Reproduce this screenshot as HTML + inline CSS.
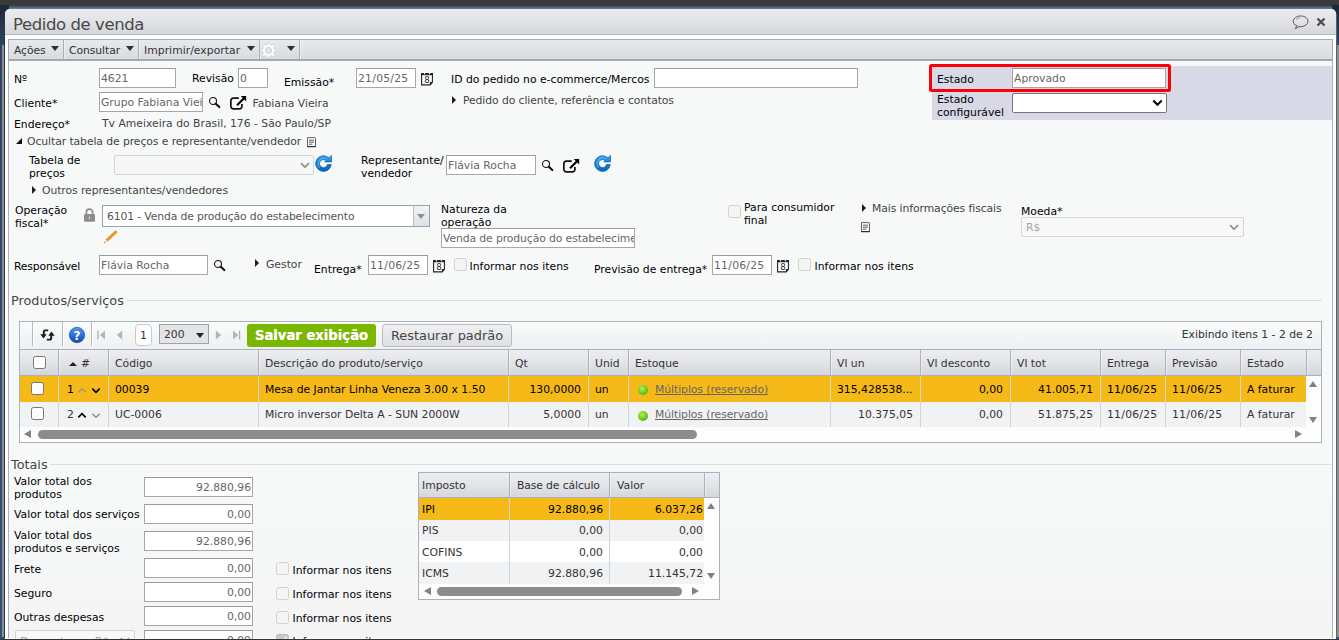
<!DOCTYPE html>
<html lang="pt-BR">
<head>
<meta charset="utf-8">
<title>Pedido de venda</title>
<style>
*{box-sizing:border-box;margin:0;padding:0}
html,body{width:1339px;height:640px;overflow:hidden}
body{position:relative;background:linear-gradient(#1d2636 5px,#2e4566 45px,#33507a 640px);font-family:"DejaVu Sans","Liberation Sans",sans-serif;font-size:10.8px;color:#000}
.abs,.t,.in,.ic,.b{position:absolute}
.t{white-space:nowrap;line-height:13px;height:13px}
.g{color:#444}
.in{background:#fff;border:1px solid #a6a6a6;border-top-color:#9a9a9a;color:#666;line-height:19px;height:20px;padding-left:1px;white-space:nowrap;overflow:hidden}
.in.r{text-align:right;padding-right:1px;padding-left:0}
.cb{position:absolute;width:13px;height:13px;border:1px solid #d2d2d2;border-radius:2.500px;background:#f4f4f5}
.ic{display:block}
/* window */
#bgtop{left:0;top:0;width:1339px;height:5px;background:#3a3a3a}
#win{left:5px;top:9px;width:1331px;height:630px;background:#fff;border-radius:5px 5px 0 0}
#title{left:0;top:0;width:1331px;height:26px;border-radius:5px 5px 0 0;background:linear-gradient(#eaebed,#e3e4e7 45%,#d4d6da);border-bottom:1px solid #b4b9c0}
#title span{position:absolute;left:8px;top:6px;font-size:16.5px;line-height:20px;color:#484848;letter-spacing:-0.42px}
#tb{left:8px;top:39px;width:1325px;height:22px;border:1px solid #a3abb3;border-bottom:2px solid #a1a9b4;background:linear-gradient(#e8e9ec,#d9dbdf)}
#content{left:8px;top:61px;width:1325px;height:577px;border-left:1px solid #a9b1bf;border-right:1px solid #a9b1bf;background:linear-gradient(#f7f9f9,#f7f9f9 72%,#f4f4f5)}
.sep{top:40px;width:1px;height:19px;background:#a9b0b8;box-shadow:1px 0 0 rgba(255,255,255,.45)}
.tbt{color:#333;letter-spacing:-0.08px}
.dn{width:0;height:0;border-left:4.500px solid transparent;border-right:4.500px solid transparent;border-top:5px solid #2d2d2d}
.lg{font-size:12.8px;line-height:16px;height:16px;color:#444}
.hcb,.rcb{width:13px;height:13px;border:1px solid #767676;border-radius:2.500px;background:#fff}
</style>
</head>
<body>
<div id="bgtop" class="abs"></div>
<div class="abs" style="left:9px;top:5px;width:1323px;height:5px;background:linear-gradient(#2b3848,#8593a1)"></div>
<div class="abs" style="left:1.500px;top:45px;width:2.500px;height:592px;background:#8e8e8e"></div><div class="abs" style="left:1336px;top:45px;width:3px;height:592px;background:#8e8e8e"></div><div class="abs" style="left:4px;top:12px;width:1px;height:626px;background:#30343c"></div><div class="abs" style="left:1336px;top:14px;width:.7px;height:624px;background:#59616e"></div>
<div id="win" class="abs"><div id="title" class="abs"><span>Pedido de venda</span></div></div>
<div id="tb" class="abs"></div>
<div id="content" class="abs"></div>

<div class="abs sep" style="left:63px"></div><div class="abs sep" style="left:138px"></div><div class="abs sep" style="left:259px"></div><div class="abs sep" style="left:299px"></div>
<div class="t tbt" style="left:14px;top:44px">Ações</div><div class="abs dn" style="left:51px;top:46px"></div>
<div class="t tbt" style="left:69px;top:44px">Consultar</div><div class="abs dn" style="left:126px;top:46px"></div>
<div class="t tbt" style="left:144px;top:44px;letter-spacing:0.03px">Imprimir/exportar</div><div class="abs dn" style="left:247px;top:46px"></div>
<svg class="ic" style="left:260.400px;top:42.200px" width="17" height="17" viewBox="0 0 17 17"><path d="M7.17 2.75L7.28 0.80L9.72 0.80L9.83 2.75L11.62 3.49L13.08 2.19L14.81 3.92L13.51 5.38L14.25 7.17L16.20 7.28L16.20 9.72L14.25 9.83L13.51 11.62L14.81 13.08L13.08 14.81L11.62 13.51L9.83 14.25L9.72 16.20L7.28 16.20L7.17 14.25L5.38 13.51L3.92 14.81L2.19 13.08L3.49 11.62L2.75 9.83L0.80 9.72L0.80 7.28L2.75 7.17L3.49 5.38L2.19 3.92L3.92 2.19L5.38 3.49z" fill="#fff" stroke="#c6c9cd" stroke-width=".7" stroke-linejoin="round"/><circle cx="8.500" cy="8.500" r="3.100" fill="#e4e5e8" stroke="#c3c6ca" stroke-width=".8"/></svg>
<div class="abs dn" style="left:287px;top:46px"></div>
<svg class="ic" style="left:1292.300px;top:15px" width="17" height="15" viewBox="0 0 17 15"><ellipse cx="8.6" cy="6.300" rx="7.400" ry="5.400" fill="none" stroke="#5a5a5a" stroke-width="1"/><path d="M4.800 10.700 3.300 13.700 7.400 11.600" fill="#e6e7ea" stroke="#5a5a5a" stroke-width="1" stroke-linejoin="round"/><path d="M4 4.600C5.200 3.300 6.800 2.800 8.200 2.800" fill="none" stroke="#8a8a8a" stroke-width=".8"/></svg>
<svg class="ic" style="left:1316px;top:17px" width="10" height="10" viewBox="0 0 10 10"><path d="M1.500 1.500 8.500 8.500M8.500 1.500 1.500 8.500" stroke="#4d4d4d" stroke-width="2.300" stroke-linecap="butt"/></svg>
<!--TOOLBAR-->
<div class="t " style="left:14px;top:73px;">Nº</div>
<div class="in " style="left:99px;top:68px;width:77px;">4621</div>
<div class="t " style="left:192px;top:72px;">Revisão</div>
<div class="in " style="left:238px;top:68px;width:30px;">0</div>
<div class="t " style="left:284px;top:76px;">Emissão*</div>
<div class="in " style="left:356px;top:68px;width:60px;letter-spacing:0.25px">21/05/25</div>
<svg class="ic" style="left:421px;top:71px" width="13" height="15" viewBox="0 0 13 15"><path d="M.6 2.600H11.400V11.400L9.200 13.900H.6z" fill="#fff" stroke="#222" stroke-width="1.100"/><rect x="0" y="2" width="12" height="2.200" fill="#222"/><path d="M3.500 1V3.200M8.500 1V3.200" stroke="#f7f9f9" stroke-width="1.200"/><path d="M8.900 11.100H11.800L8.900 14.200z" fill="#222"/><text x="6" y="11.700" font-size="8.600" text-anchor="middle" font-family="DejaVu Sans,Liberation Sans,sans-serif" fill="#222">8</text></svg>
<div class="t " style="left:451px;top:73px;">ID do pedido no e-commerce/Mercos</div>
<div class="in " style="left:654px;top:68px;width:204px;"></div>
<div class="abs" style="left:932px;top:66px;width:400px;height:54px;background:#d8d8e6"></div>
<div class="abs" style="left:929px;top:64px;width:242px;height:28px;border:3px solid #fb0006;border-radius:2.500px"></div>
<div class="t " style="left:937px;top:73px;">Estado</div>
<div class="in " style="left:1012px;top:68px;width:154px;">Aprovado</div>
<div class="t " style="left:937px;top:93px;">Estado</div>
<div class="t " style="left:937px;top:106px;">configurável</div>
<div class="abs" style="left:1012px;top:93px;width:155px;height:20px;border:1px solid #767676;border-radius:2px;background:#fff"></div>
<svg class="ic" style="left:1152.300px;top:98.500px" width="11" height="8" viewBox="0 0 11 8"><path d="M1.300 1.500 5.500 5.800 9.700 1.500" fill="none" stroke="#000" stroke-width="2"/></svg>
<div class="t " style="left:14px;top:97px;">Cliente*</div>
<div class="in " style="left:99px;top:92px;width:104px;">Grupo Fabiana Vieira</div>
<svg class="ic" style="left:208px;top:96px" width="13" height="13" viewBox="0 0 13 13"><circle cx="5" cy="5" r="3.500" fill="none" stroke="#111" stroke-width="1.100"/><path d="M7.800 7.800 11.300 11.100" stroke="#111" stroke-width="2.100" stroke-linecap="round"/></svg>
<svg class="ic" style="left:229px;top:95px" width="18" height="16" viewBox="0 0 18 16"><path d="M9.800 3.050H4.350A2.500 2.500 0 0 0 1.850 5.550V11.350A2.500 2.500 0 0 0 4.350 13.850H10.450A2.500 2.500 0 0 0 12.950 11.350V9" fill="none" stroke="#111" stroke-width="1.700"/><path d="M8 10.200 15 3.200" stroke="#000" stroke-width="2.200"/><path d="M11.800 1H17.200V6.500z" fill="#000"/></svg>
<div class="t g" style="left:252.600px;top:97px;">Fabiana Vieira</div>
<div class="abs" style="left:451.8px;top:96px;width:0;height:0;border-top:4.100px solid transparent;border-bottom:4.100px solid transparent;border-left:4.300px solid #1e1e1e"></div>
<div class="t g" style="left:463px;top:94px;letter-spacing:-0.085px">Pedido do cliente, referência e contatos</div>
<div class="t " style="left:14px;top:118px;">Endereço*</div>
<div class="t g" style="left:102px;top:117px;">Tv Ameixeira do Brasil, 176 - São Paulo/SP</div>
<div class="abs" style="left:16px;top:137.500px;width:0;height:0;border-left:6.500px solid transparent;border-bottom:6.500px solid #111"></div>
<div class="t g" style="left:27px;top:135px;letter-spacing:-0.075px">Ocultar tabela de preços e representante/vendedor</div>
<svg class="ic" style="left:307.3px;top:137px" width="10" height="11" viewBox="0 0 10 11"><path d="M.5 .6H7.800Q8.500 .6 8.500 1.300V9.600H.5z" fill="#fcfcfc" stroke="#3a3a3a" stroke-width=".8"/><path d="M.2 9.600H8.800" stroke="#2a2a2a" stroke-width="1.100"/><path d="M2 3.200H7M2 5.200H7M2 7.200H5.200" stroke="#333" stroke-width=".8"/></svg>
<div class="t " style="left:29px;top:154px;">Tabela de</div>
<div class="t " style="left:29px;top:167px;">preços</div>
<div class="abs" style="left:114px;top:155px;width:200px;height:20px;border:1px solid #d4d4d4;border-radius:2px;background:#f6f7f7"></div>
<svg class="ic" style="left:300px;top:162px" width="10" height="7" viewBox="0 0 10 7"><path d="M1 1.200 5 5.200 9 1.200" fill="none" stroke="#959595" stroke-width="1.800"/></svg>
<svg class="ic" style="left:314.800px;top:155.300px" width="17" height="17" viewBox="0 0 17 17"><defs><linearGradient id="rg316" x1="0" y1="0" x2="0" y2="1"><stop offset="0" stop-color="#3aa3ec"/><stop offset=".55" stop-color="#1479cf"/><stop offset="1" stop-color="#0a64b8"/></linearGradient></defs><path d="M16.350 9.500A7.900 7.900 0 1 1 13.930 2.860L16.500 .4V6.900H9.700L11.100 5.560A4 4 0 1 0 12.400 9.500z" fill="url(#rg316)" stroke="#0b62b6" stroke-width=".7" stroke-linejoin="round"/><path d="M4.400 12.500A5.900 5.900 0 0 1 12.300 4" fill="none" stroke="#5cb8f4" stroke-width="1.300" opacity=".75"/></svg>
<div class="t " style="left:361px;top:154px;">Representante/</div>
<div class="t " style="left:361px;top:167px;">vendedor</div>
<div class="in " style="left:446px;top:155px;width:90px;">Flávia Rocha</div>
<svg class="ic" style="left:541px;top:159px" width="13" height="13" viewBox="0 0 13 13"><circle cx="5" cy="5" r="3.500" fill="none" stroke="#111" stroke-width="1.100"/><path d="M7.800 7.800 11.300 11.100" stroke="#111" stroke-width="2.100" stroke-linecap="round"/></svg>
<svg class="ic" style="left:562px;top:158px" width="18" height="16" viewBox="0 0 18 16"><path d="M9.800 3.050H4.350A2.500 2.500 0 0 0 1.850 5.550V11.350A2.500 2.500 0 0 0 4.350 13.850H10.450A2.500 2.500 0 0 0 12.950 11.350V9" fill="none" stroke="#111" stroke-width="1.700"/><path d="M8 10.200 15 3.200" stroke="#000" stroke-width="2.200"/><path d="M11.800 1H17.200V6.500z" fill="#000"/></svg>
<svg class="ic" style="left:593.800px;top:155.300px" width="17" height="17" viewBox="0 0 17 17"><defs><linearGradient id="rg595" x1="0" y1="0" x2="0" y2="1"><stop offset="0" stop-color="#3aa3ec"/><stop offset=".55" stop-color="#1479cf"/><stop offset="1" stop-color="#0a64b8"/></linearGradient></defs><path d="M16.350 9.500A7.900 7.900 0 1 1 13.930 2.860L16.500 .4V6.900H9.700L11.100 5.560A4 4 0 1 0 12.400 9.500z" fill="url(#rg595)" stroke="#0b62b6" stroke-width=".7" stroke-linejoin="round"/><path d="M4.400 12.500A5.900 5.900 0 0 1 12.300 4" fill="none" stroke="#5cb8f4" stroke-width="1.300" opacity=".75"/></svg>
<div class="abs" style="left:32px;top:185.5px;width:0;height:0;border-top:4.100px solid transparent;border-bottom:4.100px solid transparent;border-left:4.300px solid #1e1e1e"></div>
<div class="t g" style="left:42px;top:184px;letter-spacing:-0.07px">Outros representantes/vendedores</div>
<div class="t " style="left:15px;top:204px;">Operação</div>
<div class="t " style="left:15px;top:217px;">fiscal*</div>
<svg class="ic" style="left:83px;top:208px" width="13" height="15" viewBox="0 0 13 15"><path d="M3.400 6.500V4.300A3.100 3.100 0 0 1 9.600 4.300V6.500" fill="none" stroke="#8c8c8c" stroke-width="1.700"/><rect x="1" y="6" width="11" height="7.800" rx="1.200" fill="#8c8c8c"/><path d="M6 8.800H7V11.200H6.300V9.700H5.700z" fill="#f2f2f2"/></svg>
<div class="abs" style="left:102px;top:205px;width:328px;height:22px;border:1px solid #94a2b6;background:#fff"></div>
<div class="t " style="left:107px;top:210px;color:#555;letter-spacing:-0.13px">6101 - Venda de produção do estabelecimento</div>
<div class="abs" style="left:413px;top:206px;width:16px;height:20px;border-left:1px solid #b7bcc4;background:linear-gradient(#f3f4f6,#dfe1e5)"></div>
<div class="abs" style="left:416.500px;top:214px;width:0;height:0;border-left:4.500px solid transparent;border-right:4.500px solid transparent;border-top:5px solid #8a8f98"></div>
<svg class="ic" style="left:103px;top:229px" width="16" height="15" viewBox="0 0 16 15"><path d="M12.400 1.200 14.700 3.300 4.800 12.600 2.500 10.500z" fill="#f0952c"/><path d="M2.500 10.500 4.800 12.600 1.200 13.900z" fill="#f3d7a8"/><path d="M1.200 13.900 2.300 13.500 1.600 12.800z" fill="#333"/></svg>
<div class="t " style="left:441px;top:203px;">Natureza da</div>
<div class="t " style="left:441px;top:216px;">operação</div>
<div class="in " style="left:441px;top:228px;width:194px;letter-spacing:-0.1px">Venda de produção do estabelecimento</div>
<div class="cb" style="left:728px;top:205px"></div>
<div class="t " style="left:744px;top:201px;">Para consumidor</div>
<div class="t " style="left:744px;top:214px;">final</div>
<div class="abs" style="left:861.8px;top:204px;width:0;height:0;border-top:4.100px solid transparent;border-bottom:4.100px solid transparent;border-left:4.300px solid #1e1e1e"></div>
<div class="t g" style="left:872px;top:202px;letter-spacing:-0.08px">Mais informações fiscais</div>
<svg class="ic" style="left:861.3px;top:222px" width="10" height="11" viewBox="0 0 10 11"><path d="M.5 .6H7.800Q8.500 .6 8.500 1.300V9.600H.5z" fill="#fcfcfc" stroke="#3a3a3a" stroke-width=".8"/><path d="M.2 9.600H8.800" stroke="#2a2a2a" stroke-width="1.100"/><path d="M2 3.200H7M2 5.200H7M2 7.200H5.200" stroke="#333" stroke-width=".8"/></svg>
<div class="t " style="left:1021px;top:205px;">Moeda*</div>
<div class="abs" style="left:1021px;top:217px;width:223px;height:20px;border:1px solid #d6d6d6;border-radius:2px;background:#f7f8f8"></div>
<div class="t " style="left:1026px;top:221px;color:#a8a8a8">R$</div>
<svg class="ic" style="left:1229px;top:224px" width="10" height="7" viewBox="0 0 10 7"><path d="M1 1.200 5 5.200 9 1.200" fill="none" stroke="#959595" stroke-width="1.800"/></svg>
<div class="t " style="left:14px;top:260px;letter-spacing:-0.15px">Responsável</div>
<div class="in " style="left:99px;top:255px;width:109px;">Flávia Rocha</div>
<svg class="ic" style="left:213px;top:259.3px" width="13" height="13" viewBox="0 0 13 13"><circle cx="5" cy="5" r="3.500" fill="none" stroke="#111" stroke-width="1.100"/><path d="M7.800 7.800 11.300 11.100" stroke="#111" stroke-width="2.100" stroke-linecap="round"/></svg>
<div class="abs" style="left:254.8px;top:259px;width:0;height:0;border-top:4.100px solid transparent;border-bottom:4.100px solid transparent;border-left:4.300px solid #1e1e1e"></div>
<div class="t g" style="left:266px;top:258px;letter-spacing:0px">Gestor</div>
<div class="t " style="left:314px;top:263px;">Entrega*</div>
<div class="in " style="left:368px;top:255px;width:60px;letter-spacing:0.25px">11/06/25</div>
<svg class="ic" style="left:432.6px;top:258px" width="13" height="15" viewBox="0 0 13 15"><path d="M.6 2.600H11.400V11.400L9.200 13.900H.6z" fill="#fff" stroke="#222" stroke-width="1.100"/><rect x="0" y="2" width="12" height="2.200" fill="#222"/><path d="M3.500 1V3.200M8.500 1V3.200" stroke="#f7f9f9" stroke-width="1.200"/><path d="M8.900 11.100H11.800L8.900 14.200z" fill="#222"/><text x="6" y="11.700" font-size="8.600" text-anchor="middle" font-family="DejaVu Sans,Liberation Sans,sans-serif" fill="#222">8</text></svg>
<div class="cb" style="left:454px;top:258px"></div>
<div class="t " style="left:469.5px;top:260px;letter-spacing:0.04px">Informar nos itens</div>
<div class="t " style="left:594px;top:263px;">Previsão de entrega*</div>
<div class="in " style="left:712px;top:255px;width:60px;letter-spacing:0.25px">11/06/25</div>
<svg class="ic" style="left:777.2px;top:258px" width="13" height="15" viewBox="0 0 13 15"><path d="M.6 2.600H11.400V11.400L9.200 13.900H.6z" fill="#fff" stroke="#222" stroke-width="1.100"/><rect x="0" y="2" width="12" height="2.200" fill="#222"/><path d="M3.500 1V3.200M8.500 1V3.200" stroke="#f7f9f9" stroke-width="1.200"/><path d="M8.900 11.100H11.800L8.900 14.200z" fill="#222"/><text x="6" y="11.700" font-size="8.600" text-anchor="middle" font-family="DejaVu Sans,Liberation Sans,sans-serif" fill="#222">8</text></svg>
<div class="cb" style="left:798px;top:258px"></div>
<div class="t " style="left:814.5px;top:260px;letter-spacing:0.04px">Informar nos itens</div>
<!--FORM-->
<div class="t lg" style="left:11px;top:293px;">Produtos/serviços</div>
<div class="abs" style="left:127px;top:300px;width:1195px;height:1px;background:#dcdee0"></div>
<div class="abs" style="left:19px;top:321px;width:1303px;height:122px;border:1px solid #a9b1bd;background:#fdfdfd"></div>
<div class="abs" style="left:20px;top:322px;width:1301px;height:27px;background:linear-gradient(#fafbfb,#eef0f1)"></div>
<div class="abs" style="left:32px;top:322px;width:1px;height:24px;background:#b3b9c1;box-shadow:1px 0 0 #fff"></div>
<div class="abs" style="left:62px;top:322px;width:1px;height:24px;background:#b3b9c1;box-shadow:1px 0 0 #fff"></div>
<div class="abs" style="left:91px;top:322px;width:1px;height:24px;background:#b3b9c1;box-shadow:1px 0 0 #fff"></div>
<svg class="ic" style="left:39.500px;top:329px" width="15" height="12" viewBox="0 0 15 12"><path d="M8.200 1.400H5.400Q3.800 1.400 3.800 3V6" fill="none" stroke="#1a1a1a" stroke-width="1.900"/><path d="M.3 5.200H6.700L3.500 9.500z" fill="#1a1a1a"/><path d="M6.800 10.600H9.600Q11.200 10.600 11.200 9V6" fill="none" stroke="#1a1a1a" stroke-width="1.900"/><path d="M14.700 6.800H8.300L11.500 2.500z" fill="#1a1a1a"/></svg>
<svg class="ic" style="left:68px;top:326px" width="18" height="18" viewBox="0 0 18 18"><defs><linearGradient id="hg" x1="0" y1="0" x2="0" y2="1"><stop offset="0" stop-color="#5a98ea"/><stop offset=".5" stop-color="#2f6fd6"/><stop offset="1" stop-color="#1446b0"/></linearGradient></defs><circle cx="9" cy="9" r="7.700" fill="url(#hg)" stroke="#2352b4" stroke-width=".7"/><text x="9" y="14.100" font-size="12" font-weight="bold" text-anchor="middle" fill="#fff" font-family="DejaVu Sans,Liberation Sans,sans-serif">?</text></svg>
<svg class="ic" style="left:97px;top:330px" width="9" height="10" viewBox="0 0 9 10"><path d="M1 .5V9.500" stroke="#b4b4b4" stroke-width="1.400"/><path d="M8 .5V9.500L2.800 5z" fill="#b4b4b4"/></svg>
<svg class="ic" style="left:116px;top:330px" width="7" height="10" viewBox="0 0 7 10"><path d="M6.200 .5V9.500L.8 5z" fill="#b4b4b4"/></svg>
<div class="abs" style="left:135px;top:324px;width:17px;height:22px;border:1px solid #c6c8cc;border-radius:4px;background:#fff;text-align:center;line-height:21px;color:#333">1</div>
<div class="abs" style="left:159px;top:324px;width:50px;height:20px;border:1px solid #a2a2a2;background:#e3e4e7"></div>
<div class="t " style="left:164px;top:328px;color:#333">200</div>
<div class="abs" style="left:195.500px;top:333px;width:0;height:0;border-left:4.500px solid transparent;border-right:4.500px solid transparent;border-top:5px solid #222"></div>
<svg class="ic" style="left:215px;top:330px" width="7" height="10" viewBox="0 0 7 10"><path d="M.8 .5V9.500L6.200 5z" fill="#b4b4b4"/></svg>
<svg class="ic" style="left:232px;top:330px" width="9" height="10" viewBox="0 0 9 10"><path d="M7.500 .5V9.500" stroke="#b4b4b4" stroke-width="1.400"/><path d="M1 .5V9.500L6.200 5z" fill="#b4b4b4"/></svg>
<div class="abs" style="left:247px;top:324px;width:129px;height:23px;border-radius:3px;background:#7ab800;color:#fff;font-weight:bold;font-size:13.2px;line-height:24px;text-align:center;letter-spacing:0;text-shadow:0 0 .5px #fff">Salvar exibição</div>
<div class="abs" style="left:382px;top:324px;width:130px;height:23px;border-radius:3px;border:1px solid #b9bcc1;background:linear-gradient(#f0f0f2,#dddfe2);color:#444;font-size:12.9px;line-height:22px;text-align:center">Restaurar padrão</div>
<div class="t " style="right:26px;top:328px;color:#333">Exibindo itens 1 - 2 de 2</div>
<div class="abs" style="left:20px;top:349px;width:1301px;height:27px;border-top:1px solid #a9b1bd;border-bottom:1px solid #a9b1bd;background:linear-gradient(#edeef1,#e1e3e6 55%,#d3d6db)"></div>
<div class="abs" style="left:58px;top:350px;width:1px;height:25px;background:#aab1bb;box-shadow:1px 0 0 rgba(255,255,255,.4)"></div>
<div class="abs" style="left:108px;top:350px;width:1px;height:25px;background:#aab1bb;box-shadow:1px 0 0 rgba(255,255,255,.4)"></div>
<div class="abs" style="left:258px;top:350px;width:1px;height:25px;background:#aab1bb;box-shadow:1px 0 0 rgba(255,255,255,.4)"></div>
<div class="abs" style="left:508px;top:350px;width:1px;height:25px;background:#aab1bb;box-shadow:1px 0 0 rgba(255,255,255,.4)"></div>
<div class="abs" style="left:588px;top:350px;width:1px;height:25px;background:#aab1bb;box-shadow:1px 0 0 rgba(255,255,255,.4)"></div>
<div class="abs" style="left:628px;top:350px;width:1px;height:25px;background:#aab1bb;box-shadow:1px 0 0 rgba(255,255,255,.4)"></div>
<div class="abs" style="left:830px;top:350px;width:1px;height:25px;background:#aab1bb;box-shadow:1px 0 0 rgba(255,255,255,.4)"></div>
<div class="abs" style="left:920px;top:350px;width:1px;height:25px;background:#aab1bb;box-shadow:1px 0 0 rgba(255,255,255,.4)"></div>
<div class="abs" style="left:1010px;top:350px;width:1px;height:25px;background:#aab1bb;box-shadow:1px 0 0 rgba(255,255,255,.4)"></div>
<div class="abs" style="left:1100px;top:350px;width:1px;height:25px;background:#aab1bb;box-shadow:1px 0 0 rgba(255,255,255,.4)"></div>
<div class="abs" style="left:1165px;top:350px;width:1px;height:25px;background:#aab1bb;box-shadow:1px 0 0 rgba(255,255,255,.4)"></div>
<div class="abs" style="left:1240px;top:350px;width:1px;height:25px;background:#aab1bb;box-shadow:1px 0 0 rgba(255,255,255,.4)"></div>
<div class="abs" style="left:1306px;top:350px;width:1px;height:25px;background:#aab1bb;box-shadow:1px 0 0 rgba(255,255,255,.4)"></div>
<div class="abs hcb" style="left:33px;top:356px"></div>
<div class="abs" style="left:69px;top:362px;width:0;height:0;border-left:4px solid transparent;border-right:4px solid transparent;border-bottom:4px solid #222"></div>
<div class="t " style="left:81px;top:357px;color:#333">#</div>
<div class="t " style="left:115px;top:357px;color:#333">Código</div>
<div class="t " style="left:265px;top:357px;color:#333">Descrição do produto/serviço</div>
<div class="t " style="left:515px;top:357px;color:#333">Qt</div>
<div class="t " style="left:595px;top:357px;color:#333">Unid</div>
<div class="t " style="left:635px;top:357px;color:#333">Estoque</div>
<div class="t " style="left:837px;top:357px;color:#333">Vl un</div>
<div class="t " style="left:927px;top:357px;color:#333">Vl desconto</div>
<div class="t " style="left:1017px;top:357px;color:#333">Vl tot</div>
<div class="t " style="left:1107px;top:357px;color:#333">Entrega</div>
<div class="t " style="left:1172px;top:357px;color:#333">Previsão</div>
<div class="t " style="left:1247px;top:357px;color:#333">Estado</div>
<div class="abs" style="left:20px;top:376px;width:1286px;height:26px;background:#f5b918"></div>
<div class="abs" style="left:20px;top:402px;width:1286px;height:25px;background:#f1f2f4"></div>
<div class="abs" style="left:58px;top:376px;width:1px;height:26px;background:#dcd8cc"></div>
<div class="abs" style="left:58px;top:402px;width:1px;height:25px;background:#d0d3d8"></div>
<div class="abs" style="left:108px;top:376px;width:1px;height:26px;background:#dcd8cc"></div>
<div class="abs" style="left:108px;top:402px;width:1px;height:25px;background:#d0d3d8"></div>
<div class="abs" style="left:258px;top:376px;width:1px;height:26px;background:#dcd8cc"></div>
<div class="abs" style="left:258px;top:402px;width:1px;height:25px;background:#d0d3d8"></div>
<div class="abs" style="left:508px;top:376px;width:1px;height:26px;background:#dcd8cc"></div>
<div class="abs" style="left:508px;top:402px;width:1px;height:25px;background:#d0d3d8"></div>
<div class="abs" style="left:588px;top:376px;width:1px;height:26px;background:#dcd8cc"></div>
<div class="abs" style="left:588px;top:402px;width:1px;height:25px;background:#d0d3d8"></div>
<div class="abs" style="left:628px;top:376px;width:1px;height:26px;background:#dcd8cc"></div>
<div class="abs" style="left:628px;top:402px;width:1px;height:25px;background:#d0d3d8"></div>
<div class="abs" style="left:830px;top:376px;width:1px;height:26px;background:#dcd8cc"></div>
<div class="abs" style="left:830px;top:402px;width:1px;height:25px;background:#d0d3d8"></div>
<div class="abs" style="left:920px;top:376px;width:1px;height:26px;background:#dcd8cc"></div>
<div class="abs" style="left:920px;top:402px;width:1px;height:25px;background:#d0d3d8"></div>
<div class="abs" style="left:1010px;top:376px;width:1px;height:26px;background:#dcd8cc"></div>
<div class="abs" style="left:1010px;top:402px;width:1px;height:25px;background:#d0d3d8"></div>
<div class="abs" style="left:1100px;top:376px;width:1px;height:26px;background:#dcd8cc"></div>
<div class="abs" style="left:1100px;top:402px;width:1px;height:25px;background:#d0d3d8"></div>
<div class="abs" style="left:1165px;top:376px;width:1px;height:26px;background:#dcd8cc"></div>
<div class="abs" style="left:1165px;top:402px;width:1px;height:25px;background:#d0d3d8"></div>
<div class="abs" style="left:1240px;top:376px;width:1px;height:26px;background:#dcd8cc"></div>
<div class="abs" style="left:1240px;top:402px;width:1px;height:25px;background:#d0d3d8"></div>
<div class="abs rcb" style="left:31px;top:382px"></div>
<div class="t " style="left:67px;top:383px;color:#000">1</div>
<svg class="ic" style="left:77px;top:387px" width="10" height="7" viewBox="0 0 10 7"><path d="M1.300 5.300 5 1.700 8.700 5.300" fill="none" stroke="#a3987e" stroke-width="1.4"/></svg>
<svg class="ic" style="left:91px;top:387px" width="10" height="7" viewBox="0 0 10 7"><path d="M1.300 1.700 5 5.300 8.700 1.700" fill="none" stroke="#000" stroke-width="1.7"/></svg>
<div class="t " style="left:115px;top:383px;color:#000">00039</div>
<div class="t " style="left:265px;top:383px;color:#000">Mesa de Jantar Linha Veneza 3.00 x 1.50</div>
<div class="t " style="right:758px;top:383px;color:#000">130,0000</div>
<div class="t " style="left:595px;top:383px;color:#000">un</div>
<div class="abs" style="left:638px;top:385px;width:10px;height:10px;border-radius:50%;background:radial-gradient(circle at 40% 35%,#b4f060,#5fc41a 60%,#4aa810)"></div>
<div class="t " style="left:655px;top:383px;color:#666;text-decoration:underline;text-decoration-thickness:1px;text-underline-offset:.5px;letter-spacing:-0.06px">Múltiplos (reservado)</div>
<div class="t " style="left:837px;top:383px;color:#000">315,428538...</div>
<div class="t " style="right:336px;top:383px;color:#000">0,00</div>
<div class="t " style="right:246px;top:383px;color:#000">41.005,71</div>
<div class="t " style="left:1107px;top:383px;color:#000;letter-spacing:0.25px">11/06/25</div>
<div class="t " style="left:1172px;top:383px;color:#000;letter-spacing:0.25px">11/06/25</div>
<div class="t " style="left:1247px;top:383px;color:#000">A faturar</div>
<div class="abs rcb" style="left:31px;top:407px"></div>
<div class="t " style="left:67px;top:408px;color:#333">2</div>
<svg class="ic" style="left:77px;top:412px" width="10" height="7" viewBox="0 0 10 7"><path d="M1.300 5.300 5 1.700 8.700 5.300" fill="none" stroke="#000" stroke-width="1.7"/></svg>
<svg class="ic" style="left:91px;top:412px" width="10" height="7" viewBox="0 0 10 7"><path d="M1.300 1.700 5 5.300 8.700 1.700" fill="none" stroke="#8c8c8c" stroke-width="1.3"/></svg>
<div class="t " style="left:115px;top:408px;color:#333">UC-0006</div>
<div class="t " style="left:265px;top:408px;color:#333">Micro inversor Delta A - SUN 2000W</div>
<div class="t " style="right:758px;top:408px;color:#333">5,0000</div>
<div class="t " style="left:595px;top:408px;color:#333">un</div>
<div class="abs" style="left:638px;top:411px;width:10px;height:10px;border-radius:50%;background:radial-gradient(circle at 40% 35%,#b4f060,#5fc41a 60%,#4aa810)"></div>
<div class="t " style="left:655px;top:408px;color:#666;text-decoration:underline;text-decoration-thickness:1px;text-underline-offset:.5px;letter-spacing:-0.06px">Múltiplos (reservado)</div>
<div class="t " style="right:426px;top:408px;color:#333">10.375,05</div>
<div class="t " style="right:336px;top:408px;color:#333">0,00</div>
<div class="t " style="right:246px;top:408px;color:#333">51.875,25</div>
<div class="t " style="left:1107px;top:408px;color:#333;letter-spacing:0.25px">11/06/25</div>
<div class="t " style="left:1172px;top:408px;color:#333;letter-spacing:0.25px">11/06/25</div>
<div class="t " style="left:1247px;top:408px;color:#333">A faturar</div>
<div class="abs" style="left:1309px;top:381px;width:0;height:0;border-left:4.700px solid transparent;border-right:4.700px solid transparent;border-bottom:6.800px solid #828282"></div>
<div class="abs" style="left:1309px;top:417px;width:0;height:0;border-left:4.700px solid transparent;border-right:4.700px solid transparent;border-top:6.800px solid #828282"></div>
<div class="abs" style="left:24px;top:430px;width:0;height:0;border-top:4.700px solid transparent;border-bottom:4.700px solid transparent;border-right:7.500px solid #828282"></div>
<div class="abs" style="left:38px;top:430px;width:659px;height:9px;border-radius:5px;background:#8c8c8c"></div>
<div class="abs" style="left:1295px;top:430px;width:0;height:0;border-top:4.700px solid transparent;border-bottom:4.700px solid transparent;border-left:7.500px solid #828282"></div>
<!--GRID-->
<div class="t lg" style="left:11px;top:457px;">Totais</div>
<div class="abs" style="left:50px;top:464px;width:1281px;height:1px;background:#dcdee0"></div>
<div class="t " style="left:14px;top:475px;">Valor total dos</div>
<div class="t " style="left:14px;top:488px;">produtos</div>
<div class="in r" style="left:144px;top:477px;width:109px;">92.880,96</div>
<div class="t " style="left:14px;top:508px;">Valor total dos serviços</div>
<div class="in r" style="left:144px;top:504px;width:109px;">0,00</div>
<div class="t " style="left:14px;top:529px;">Valor total dos</div>
<div class="t " style="left:14px;top:542px;">produtos e serviços</div>
<div class="in r" style="left:144px;top:531px;width:109px;">92.880,96</div>
<div class="t " style="left:14px;top:563px;">Frete</div>
<div class="in r" style="left:144px;top:558px;width:109px;">0,00</div>
<div class="cb " style="left:276px;top:562px"></div>
<div class="t " style="left:292.5px;top:564px;letter-spacing:0.04px">Informar nos itens</div>
<div class="t " style="left:14px;top:587px;">Seguro</div>
<div class="in r" style="left:144px;top:582px;width:109px;">0,00</div>
<div class="cb " style="left:276px;top:587px"></div>
<div class="t " style="left:292.5px;top:588px;letter-spacing:0.04px">Informar nos itens</div>
<div class="t " style="left:14px;top:611px;">Outras despesas</div>
<div class="in r" style="left:144px;top:606px;width:109px;">0,00</div>
<div class="cb " style="left:276px;top:611px"></div>
<div class="t " style="left:292.5px;top:612px;letter-spacing:0.04px">Informar nos itens</div>
<div class="abs" style="left:15px;top:630px;width:120px;height:19px;border:1px solid #d4d4d4;border-radius:2px;background:#f7f8f8"></div>
<div class="t " style="left:20px;top:635px;color:#a8a8a8">Desconto em R$</div>
<svg class="ic" style="left:120px;top:637px" width="10" height="7" viewBox="0 0 10 7"><path d="M1 1.200 5 5.200 9 1.200" fill="none" stroke="#959595" stroke-width="1.800"/></svg>
<div class="in r" style="left:144px;top:630px;width:109px;">0,00</div>
<div class="cb" style="left:276px;top:634px;background:#c9c9c9;border-color:#bdbdbd"></div><svg class="ic" style="left:277px;top:635px" width="11" height="11" viewBox="0 0 11 11"><path d="M2 5.500 4.500 8 9.500 2" fill="none" stroke="#f4f4f4" stroke-width="1.600"/></svg>
<div class="t " style="left:292.5px;top:635px;letter-spacing:0.04px">Informar nos itens</div>
<div class="abs" style="left:418px;top:472px;width:302px;height:128px;border:1px solid #a9b1bd;background:#fdfdfd"></div>
<div class="abs" style="left:419px;top:473px;width:300px;height:25px;border-bottom:1px solid #a9b1bd;background:linear-gradient(#edeef1,#e1e3e6 55%,#d3d6db)"></div>
<div class="abs" style="left:509px;top:473px;width:1px;height:24px;background:#aab1bb;box-shadow:1px 0 0 rgba(255,255,255,.4)"></div>
<div class="abs" style="left:609px;top:473px;width:1px;height:24px;background:#aab1bb;box-shadow:1px 0 0 rgba(255,255,255,.4)"></div>
<div class="abs" style="left:704px;top:473px;width:1px;height:24px;background:#aab1bb;box-shadow:1px 0 0 rgba(255,255,255,.4)"></div>
<div class="t " style="left:422px;top:479px;color:#333">Imposto</div>
<div class="t " style="left:517px;top:479px;color:#333;letter-spacing:-0.12px">Base de cálculo</div>
<div class="t " style="left:617px;top:479px;color:#333">Valor</div>
<div class="abs" style="left:419px;top:498px;width:285px;height:22px;background:#f5b918"></div>
<div class="abs" style="left:509px;top:498px;width:1px;height:22px;background:#dcd8cc"></div>
<div class="abs" style="left:609px;top:498px;width:1px;height:22px;background:#dcd8cc"></div>
<div class="t " style="left:422px;top:503px;color:#000">IPI</div>
<div class="t " style="right:736px;top:503px;color:#000">92.880,96</div>
<div class="t " style="right:636px;top:503px;color:#000">6.037,26</div>
<div class="abs" style="left:419px;top:520px;width:285px;height:21px;background:#f1f2f4"></div>
<div class="abs" style="left:509px;top:520px;width:1px;height:21px;background:#d0d3d8"></div>
<div class="abs" style="left:609px;top:520px;width:1px;height:21px;background:#d0d3d8"></div>
<div class="t " style="left:422px;top:524px;color:#333">PIS</div>
<div class="t " style="right:736px;top:524px;color:#333">0,00</div>
<div class="t " style="right:636px;top:524px;color:#333">0,00</div>
<div class="abs" style="left:419px;top:541px;width:285px;height:21px;background:#fff"></div>
<div class="abs" style="left:509px;top:541px;width:1px;height:21px;background:#d0d3d8"></div>
<div class="abs" style="left:609px;top:541px;width:1px;height:21px;background:#d0d3d8"></div>
<div class="t " style="left:422px;top:546px;color:#333">COFINS</div>
<div class="t " style="right:736px;top:546px;color:#333">0,00</div>
<div class="t " style="right:636px;top:546px;color:#333">0,00</div>
<div class="abs" style="left:419px;top:562px;width:285px;height:22px;background:#f1f2f4"></div>
<div class="abs" style="left:509px;top:562px;width:1px;height:22px;background:#d0d3d8"></div>
<div class="abs" style="left:609px;top:562px;width:1px;height:22px;background:#d0d3d8"></div>
<div class="t " style="left:422px;top:567px;color:#333">ICMS</div>
<div class="t " style="right:736px;top:567px;color:#333">92.880,96</div>
<div class="t " style="right:636px;top:567px;color:#333">11.145,72</div>
<div class="abs" style="left:707px;top:503px;width:0;height:0;border-left:4.700px solid transparent;border-right:4.700px solid transparent;border-bottom:6.800px solid #828282"></div>
<div class="abs" style="left:707px;top:573px;width:0;height:0;border-left:4.700px solid transparent;border-right:4.700px solid transparent;border-top:6.800px solid #828282"></div>
<div class="abs" style="left:424px;top:587px;width:0;height:0;border-top:4.700px solid transparent;border-bottom:4.700px solid transparent;border-right:7.500px solid #828282"></div>
<div class="abs" style="left:437px;top:587px;width:245px;height:9px;border-radius:5px;background:#8c8c8c"></div>
<div class="abs" style="left:692px;top:587px;width:0;height:0;border-top:4.700px solid transparent;border-bottom:4.700px solid transparent;border-left:7.500px solid #828282"></div>
<div class="abs" style="left:0;top:639px;width:1339px;height:1px;background:#2c3440"></div>
<!--TOTALS-->
</body>
</html>
